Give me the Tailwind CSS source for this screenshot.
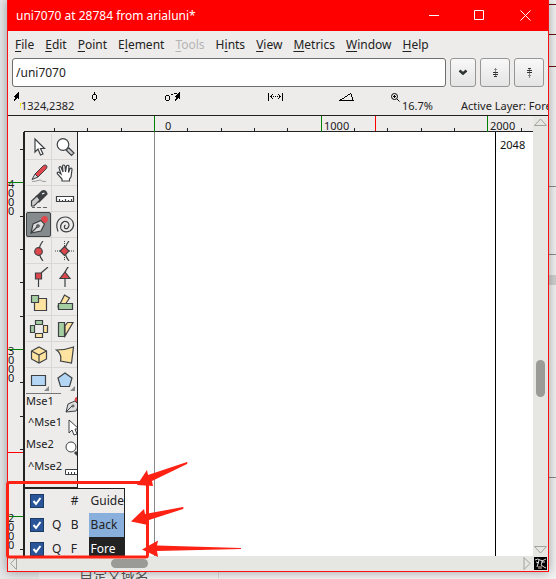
<!DOCTYPE html>
<html lang="en">
<head>
<meta charset="utf-8">
<meta name="viewport" content="width=device-width, initial-scale=1">
<title>uni7070 at 28784 from arialuni*</title>
<script src="https://cdn.jsdelivr.net/npm/@tailwindcss/browser@4"></script>
</head>
<body class="relative h-screen overflow-hidden bg-[#e6e7e9] font-['Noto_Sans','Noto_Sans_CJK_SC',sans-serif] text-xs text-[#222]">

<!-- Page behind the window -->
<div class="absolute inset-y-0 left-[39px] right-0 bg-[#f2f2f2]" aria-hidden="true"></div>
<svg class="absolute right-0 top-0 h-full w-2" fill="none" aria-hidden="true"><path d="M0 4.500h8M0 34.500h8M0 66.500h8" stroke="#6b1010"/><path d="M0 186.500h8M0 254.500h8M0 477.500h8" stroke="#8a8a8a"/><path d="M0 275h8v10H0z" fill="#d0d0ce"/></svg>
<div class="absolute bottom-0 left-[218px] h-2 w-px bg-[#ddd]" aria-hidden="true"></div>
<p class="absolute -bottom-1 left-[79px] text-sm leading-4 text-[#555] font-['Noto_Sans_CJK_SC',sans-serif]">自定义域名</p>

<div class="relative flex h-full flex-col px-[7px] pb-[7px]">
<main class="flex min-h-0 flex-1 flex-col border border-t-0 border-[#fb0f12] bg-[#edeceb] shadow-[0_0_10px_rgba(0,0,0,0.35)]">

  <header class="flex h-[31px] shrink-0 items-center bg-[#fe0000] pl-2 text-white">
    <h1 class="flex-1 text-xs">uni7070 at 28784 from arialuni*</h1>
    <button class="flex w-[46px] justify-center" aria-label="Minimize"><svg width="11" height="11" stroke="#fff" fill="none"><path d="M1 5.500h10"/></svg></button>
    <button class="flex w-[46px] justify-center" aria-label="Maximize"><svg width="11" height="11" stroke="#fff" fill="none"><path d="M.5.5h9v9h-9z"/></svg></button>
    <button class="flex w-[46px] justify-center" aria-label="Close"><svg width="11" height="11" stroke="#fff" fill="none"><path d="M.5.5l10 10M10.500.5l-10 10"/></svg></button>
  </header>

  <nav class="flex h-[27px] shrink-0 items-center gap-[11px] pl-[7px] underline-offset-2">
    <button><u>F</u>ile</button><button><u>E</u>dit</button><button><u>P</u>oint</button><button>E<u>l</u>ement</button><button disabled class="text-[#b4b4b4]"><u>T</u>ools</button><button>H<u>i</u>nts</button><button><u>V</u>iew</button><button><u>M</u>etrics</button><button><u>W</u>indow</button><button><u>H</u>elp</button>
  </nav>

  <form class="flex h-[29px] shrink-0 gap-1 px-1">
    <input aria-label="Glyph list" value="/uni7070" class="min-w-0 flex-1 rounded-[3px] border border-[#6e6e6e] bg-white px-[3px] text-xs outline-none">
    <button type="button" aria-label="Show glyph list" class="flex w-[26px] items-center justify-center rounded-[3px] border border-[#969696] bg-linear-to-b from-[#f8f8f8] to-[#e4e4e4]"><svg width="10" height="7" fill="none" stroke="#2e3436" stroke-width="2.500"><path d="M1.500 1.500L5 4.500l3.500-3"/></svg></button>
    <button type="button" aria-label="Previous" class="flex w-[30px] items-center justify-center rounded-[3px] border border-[#969696] bg-linear-to-b from-[#f8f8f8] to-[#e4e4e4]"><svg width="7" height="10" fill="none" stroke="#333"><path d="M3.500 0v9" stroke="#888"/><path d="M2 1.500h3" stroke="#888"/><path d="M1 4.500h5M1 6.500h5"/><path d="M2 8.500h3" /></svg></button>
    <button type="button" aria-label="Next" class="flex w-[30px] items-center justify-center rounded-[3px] border border-[#969696] bg-linear-to-b from-[#f8f8f8] to-[#e4e4e4]"><svg width="7" height="10" fill="none" stroke="#333"><path d="M3.500 0v10" stroke="#888"/><path d="M2 .5h3M1 2.500h5M1 4.500h5"/><path d="M2 7.500h3" stroke="#888"/></svg></button>
  </form>

  <!-- Status line: small marks over their values -->
  <section class="relative h-7 shrink-0 overflow-hidden text-[11px] leading-[14px]" aria-label="Status">
    <svg class="absolute left-0 top-0" width="400" height="28" fill="none" stroke="#000" shape-rendering="crispEdges">
      <path d="M11 5v8l-2-2-2 3h-1l1-4H5z" fill="#000" stroke="none"/>
      <path d="M12.500 16v3M12.500 20v1" stroke="#f2e600"/>
      <path d="M86.500 5v3M86.500 12v2M85 7.500h3M85 12.500h3M84.500 8v4M88.500 8v4"/>
      <path d="M158 8.500h3M158 13.500h3M157.500 9v4M161.500 9v4M163 7.500h2M166 6.500h3"/><path d="M172 5v8l-2-2-2 3h-1l1-4h-2z" fill="#000" stroke="none"/>
      <path d="M260.500 6v8M274.500 6v8M262 9.500h2M265 9.500h1M267 9.500h1M269 9.500h1M271 9.500h2M264 7.500h1M263 8.500h1M263 10.500h1M264 11.500h1M270 7.500h1M271 8.500h1M271 10.500h1M270 11.500h1"/>
      <path d="M331 13.500h15M332 12.500h2M334 11.500h2M336 10.500h1M337 9.500h2M339 8.500h1M340 7.500h2M342 6.500h1M343.500 7v3M344.500 10v3"/>
      <g shape-rendering="auto"><circle cx="386.500" cy="9.500" r="3"/><path d="M385 9.500h3M386.500 8v3M389 12l2.500 2.500"/></g>
    </svg>
    <div class="flex h-full items-end whitespace-nowrap pb-[2px] pl-[13px]">
      <span class="w-[381px] shrink-0">1324,2382</span>
      <span class="w-[59px] shrink-0">16.7%</span>
      <span class="shrink-0">Active Layer: Fore</span>
    </div>
  </section>

  <div class="flex min-h-0 flex-1 border-t border-[#222]">
    <div class="flex min-w-0 flex-1 flex-col">

      <!-- Horizontal ruler -->
      <svg class="h-4 w-full shrink-0" fill="#222" font-size="11" aria-label="Horizontal ruler">
        <path d="M16 15.500h520" stroke="#222"/>
        <path d="M46.500 12v3M79.500 12v3M113.500 12v3M179.500 12v3M213.500 12v3M246.500 12v3M279.500 12v3M346.500 12v3M379.500 12v3M413.500 12v3M446.500 12v3M513.500 12v3" stroke="#222"/>
        <path d="M146.500 0v16M313.500 0v16M479.500 0v16" stroke="#008000"/>
        <path d="M367.500 0v15" stroke="#f00"/>
        <text x="157" y="14">0</text><text x="316" y="14">1000</text><text x="482" y="14">2000</text>
      </svg>

      <div class="flex min-h-0 flex-1">
        <!-- Vertical ruler -->
        <svg class="h-full w-[15px] shrink-0" fill="#222" font-size="11" aria-label="Vertical ruler">
          <path d="M12 17.500h3M12 84.500h3M12 117.500h3M12 150.500h3M12 184.500h3M12 250.500h3M12 284.500h3M12 317.500h3M12 350.500h3M12 417.500h3" stroke="#222"/>
          <text y="56"><tspan x="0">4</tspan><tspan x="0" dy="9">0</tspan><tspan x="0" dy="9">0</tspan><tspan x="0" dy="9">0</tspan></text>
          <text y="223"><tspan x="0">3</tspan><tspan x="0" dy="9">0</tspan><tspan x="0" dy="9">0</tspan><tspan x="0" dy="9">0</tspan></text>
          <text y="390"><tspan x="0">2</tspan><tspan x="0" dy="9">0</tspan><tspan x="0" dy="9">0</tspan><tspan x="0" dy="9">0</tspan></text>
          <path d="M0 50.500h15M0 217.500h15M0 384.500h15" stroke="#008000"/>
          <path d="M0 320.500h15" stroke="#f00"/>
        </svg>

        <section id="canvas" class="relative min-w-0 flex-1 overflow-hidden border-l-2 border-[#222] bg-white" aria-label="Glyph canvas">
          <svg class="absolute inset-0 h-full w-full" stroke="#888"><path d="M129.500 0v1200"/><path d="M470.500 0v1200" stroke="#000"/><text x="475" y="17" font-size="11" fill="#111" stroke="none">2048</text></svg>

          <aside class="relative w-[53px] border-b border-r border-[#222] bg-[#edeceb] pt-[2px] pl-px">
            <div class="grid grid-cols-2 gap-px bg-[#d8d7d6] *:flex *:h-[25px] *:items-center *:justify-center *:bg-[#edeceb] [&_svg]:size-5 [&_svg]:fill-none [&_svg]:stroke-[#3d4143] [&_svg]:stroke-[1.2]">
              <button aria-label="Pointer"><svg viewBox="0 0 20 20"><path d="M6 2v13l3-3 2.500 6 2.500-1-2.500-5.500h4z" fill="#fff"/></svg></button>
              <button aria-label="Magnify"><svg viewBox="0 0 20 20"><path d="M12 12l2-1 5 5-2.500 2.500-5-5z" fill="#ccc"/><circle cx="8" cy="7.500" r="5.800" fill="#fff"/></svg></button>
              <button aria-label="Freehand"><svg viewBox="0 0 20 20"><path d="M6 11L14.500 2.500q2-1 3 0t0 3L9 14z" fill="#e0474c" stroke-width="1"/><path d="M6 11l3 3-6 2.500z" fill="#ddd" stroke-width="1"/><path d="M3 18.500q3 0 6-1t3 0 5 1" stroke="#888" stroke-width=".8"/></svg></button>
              <button aria-label="Hand"><svg viewBox="0 0 20 20"><path d="M7 18v-2L2.500 11q-1-2 1-2l2.500 2L4 5q0-2 2-1l2 5-.5-6q1-2 2.500 0l.5 6 1-6q1.500-1.500 2.500 0l-.5 6.500 1.500-4q2-1 2 1L16 14l-1.500 2v2z" fill="#fff"/></svg></button>
              <button aria-label="Knife"><svg viewBox="0 0 20 20"><path d="M7 8L13 2q4-1.500 5 3L10 13z" fill="#3d4143"/><path d="M2.500 17v-5L8 7l3 4-6 6z" fill="#ccc"/><path d="M13 5l2.500-1" stroke="#fff"/><path d="M3 18.500h3M8 18.500h4M14 18.500h4" stroke-width=".8"/></svg></button>
              <button aria-label="Measure"><svg viewBox="0 0 20 20"><path d="M1.500 7.500h17v5h-17z" fill="#fff"/><path d="M4.500 10v3M7.500 11v2M10.500 10v3M13.500 11v2M16.500 10v3"/></svg></button>
              <button aria-label="Pen" aria-pressed="true" class="rounded-[2px] border border-[#3d4143] bg-[#858a8d]!"><svg viewBox="0 0 20 20"><circle cx="15.500" cy="4.500" r="2.800" fill="#e0474c" stroke="#e0474c"/><path d="M2 18L4 9l8-3.500L15.500 9 12 16z" fill="#ddd"/><path d="M2 18l6-6"/><circle cx="9" cy="11" r="1.200"/></svg></button>
              <button aria-label="Spiral"><svg viewBox="0 0 20 20"><path d="M3 16.500Q-.5 7 6 3q7-3 11.500 3 3 6-2.500 10-6 2.500-9-2-1.500-5 3-7.500 5-.5 5 4-1 4-4 3-1.500-2 .5-3.500"/></svg></button>
              <button aria-label="Curve point"><svg viewBox="0 0 20 20"><path d="M14 0q-8 10 0 20"/><circle cx="9.500" cy="10.500" r="3.800" fill="#e0474c"/></svg></button>
              <button aria-label="HVCurve point"><svg viewBox="0 0 20 20"><path d="M14 0q-8 10 0 20"/><path d="M9.500 0v20M0 10h20" stroke-width="1" stroke-dasharray="1 1"/><path d="M9.500 5.500L14 10l-4.500 4.500L5 10z" fill="#e0474c"/></svg></button>
              <button aria-label="Corner point"><svg viewBox="0 0 20 20"><path d="M9.500 12v8M12 6l7-6"/><path d="M6.500 6h6v6h-6z" fill="#e0474c"/></svg></button>
              <button aria-label="Tangent point"><svg viewBox="0 0 20 20"><path d="M10 11v9M10 6q1-4 4-7"/><path d="M10 5l5 6.500H5z" fill="#e0474c"/></svg></button>
              <button aria-label="Scale"><svg viewBox="0 0 20 20"><path d="M5.500 5.500h12v12h-12z" fill="#ffe3a0"/><path d="M2.500 2.500h7v7h-7z" fill="#a5cda2"/></svg></button>
              <button aria-label="Rotate"><svg viewBox="0 0 20 20"><path d="M5 11L9.500 2l5 3-4 6z" fill="#ffe3a0"/><path d="M3.500 10.500h14v6h-14z" fill="#a5cda2"/><path d="M3 12q-1 3 2 5" stroke-width=".8"/></svg></button>
              <button aria-label="Flip"><svg viewBox="0 0 20 20"><path d="M6.500 1.500h7v4h-7zM1.500 6.500h4v7h-4z" fill="#a5cda2"/><path d="M6.500 14.500h7v4h-7zM14.500 6.500h4v7h-4z" fill="#ffe3a0"/></svg></button>
              <button aria-label="Skew"><svg viewBox="0 0 20 20"><path d="M3.500 3.500h6v14h-6z" fill="#a5cda2"/><path d="M10 17V7l2.500-3.500H18z" fill="#ffe3a0"/></svg></button>
              <button aria-label="Rotate in 3D"><svg viewBox="0 0 20 20"><path d="M10 2l7.500 4v8L10 18l-7.500-4V6z" fill="#ffe3a0"/><path d="M2.500 6L10 10l7.500-4M10 10v8"/></svg></button>
              <button aria-label="Perspective"><svg viewBox="0 0 20 20"><path d="M1.500 5q9 0 17-3l-2 16-11-2Q7 9 1.500 5z" fill="#ffe3a0"/></svg></button>
              <button aria-label="Rectangle"><svg viewBox="0 0 20 20"><path d="M2.500 4.500h14v10h-14z" fill="#b3d6f5"/><path d="M20 15v5h-5z" fill="#858a8d" stroke="none"/></svg></button>
              <button aria-label="Polygon"><svg viewBox="0 0 20 20"><path d="M10 2l7 5-2.500 8.500h-9L3 7z" fill="#b3d6f5"/><path d="M20 15v5h-5z" fill="#858a8d" stroke="none"/></svg></button>
            </div>
            <dl class="grid h-[94px] grid-cols-[39px_12px] grid-rows-[repeat(4,22px)] overflow-hidden text-[11px] leading-[14px] [&_dd]:overflow-hidden [&_dd]:pt-1 [&_svg]:size-[18px] [&_svg]:max-w-none [&_svg]:fill-none [&_svg]:stroke-[#3d4143]">
              <dt><span class="block w-[35px] border-t border-[#777]">Mse1</span></dt><dd><svg viewBox="0 0 18 18"><circle cx="13" cy="3" r="3" fill="#e0474c" stroke="#e0474c"/><path d="M1 15L3 7l7-3 4 4-3 6z" fill="#ddd"/><path d="M1 15l6-6"/><circle cx="8" cy="9" r="1"/></svg></dd>
              <dt class="pl-[2px]">^Mse1</dt><dd><svg viewBox="0 0 18 18"><path d="M4 1v13l3-3 2 5 3-1-2-5h4z" fill="#fff"/></svg></dd>
              <dt>Mse2</dt><dd><svg viewBox="0 0 18 18"><path d="M10 11l5 5" stroke-width="3"/><circle cx="6" cy="6" r="5" fill="#fff"/></svg></dd>
              <dt class="pl-[2px]">^Mse2</dt><dd><svg viewBox="0 0 18 18"><path d="M.5 6.500h17v5H.5z" fill="#fff"/><path d="M3.500 9v2M6.500 9v2M9.500 9v2"/></svg></dd>
            </dl>
          </aside>

          <table class="relative w-[100px] border-r border-t border-[#222] bg-[#edeceb] text-left [&_td]:h-6 [&_td]:p-0">
            <tr><td class="w-[27px]"><label class="relative ml-[5px] block size-[14px]"><input type="checkbox" checked aria-label="Show Guide" class="block size-[14px] appearance-none border border-[#1b3a68] bg-[#2a5699]"><svg class="pointer-events-none absolute inset-0" width="14" height="14" fill="none" stroke="#fff" stroke-width="2"><path d="M3.500 7l2.500 3 4.500-6"/></svg></label></td><td class="w-[18px]"></td><td class="w-[19px] pl-px!">#</td><td class="pl-[2px]!">Guide</td></tr>
            <tr><td><label class="relative ml-[5px] block size-[14px]"><input type="checkbox" checked aria-label="Show Back" class="block size-[14px] appearance-none border border-[#1b3a68] bg-[#2a5699]"><svg class="pointer-events-none absolute inset-0" width="14" height="14" fill="none" stroke="#fff" stroke-width="2"><path d="M3.500 7l2.500 3 4.500-6"/></svg></label></td><td>Q</td><td class="pl-px!">B</td><td class="bg-[#89b0dd] pl-[2px]!">Back</td></tr>
            <tr><td><label class="relative ml-[5px] block size-[14px]"><input type="checkbox" checked aria-label="Show Fore" class="block size-[14px] appearance-none border border-[#1b3a68] bg-[#2a5699]"><svg class="pointer-events-none absolute inset-0" width="14" height="14" fill="none" stroke="#fff" stroke-width="2"><path d="M3.500 7l2.500 3 4.500-6"/></svg></label></td><td>Q</td><td class="pl-px!">F</td><td class="bg-[#222] pl-[2px]! text-white">Fore</td></tr>
          </table>
        </section>
      </div>
    </div>

    <div class="flex w-[15px] shrink-0 flex-col items-center bg-[#e6e7e2] py-[2px]" role="scrollbar" aria-label="Vertical scroll" aria-controls="canvas" aria-valuenow="60" aria-orientation="vertical">
      <svg width="13" height="8" fill="none" stroke="#a0a19c"><path d="M.5 7.500h12L6.500 1z"/></svg>
      <div class="flex-[234]"></div><div class="h-[37px] w-[9px] rounded-full bg-[#9a9b96]"></div><div class="flex-[149]"></div>
      <svg width="13" height="8" fill="none" stroke="#a0a19c"><path d="M.5.5h12L6.500 7z"/></svg>
    </div>
  </div>

  <div class="flex h-[15px] shrink-0 items-center bg-[#e6e7e2] pl-[2px]">
    <svg width="8" height="13" fill="none" stroke="#a0a19c"><path d="M6.500.5v12L.5 6.500z"/></svg>
    <div class="flex-[93]"></div><div class="h-[9px] w-[37px] rounded-full bg-[#9a9b96]"></div><div class="flex-[376]"></div>
    <svg width="8" height="13" fill="none" stroke="#a0a19c"><path d="M1 .5v12l6-6z"/></svg>
    <svg class="ml-[3px] mr-px" width="13" height="13"><path d="M0 0h13v13H0z" fill="#000"/><path d="M1 3q3-2 5 0t6-1M5 3l-2 7M9 3L7 8l3 2 2 1M2 5l3 1M7 5h4" fill="none" stroke="#ddd"/><path d="M4 9h4v3H4z" fill="#75655a"/></svg>
  </div>
</main>
</div>

<!-- Callout marks -->
<svg class="pointer-events-none absolute left-0 top-0" width="260" height="579" fill="#fd2213" aria-hidden="true">
  <rect x="7.500" y="482.500" width="140" height="74.500" rx="2" fill="none" stroke="#fd2213" stroke-width="3"/>
  <path d="M137 485L147 470l1 5 39-13q1 1 0 2L152 481l1 5z"/>
  <path d="M131 521.500L144 509l1 5 38-7q1 1 0 2L149 520l-1 5z"/>
  <path d="M142 549.500l16-9-1 5 84 2.500v1L157 551l1 6z"/>
</svg>
</body>
</html>
